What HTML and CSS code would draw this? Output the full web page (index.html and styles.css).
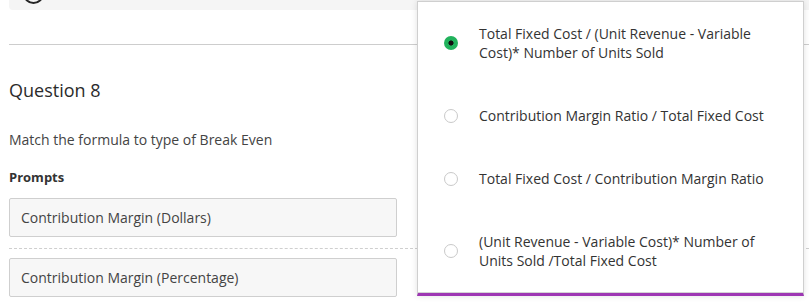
FILE: index.html
```html
<!DOCTYPE html>
<html lang="en">
<head>
  <meta charset="UTF-8">
  <meta name="viewport" content="width=device-width, initial-scale=1.0">
  <title>Question 8</title>
  <link rel="stylesheet" href="styles.css">
</head>
<body>
  <div class="page">
    <div class="prev-question">
      <span class="prev-icon"></span>
    </div>
    <hr class="divider">

    <h2 class="question-title">Question 8</h2>
    <p class="question-text">Match the formula to type of Break Even</p>
    <h3 class="prompts-label">Prompts</h3>

    <div class="prompt-box">Contribution Margin (Dollars)</div>
    <div class="prompt-sep"></div>
    <div class="prompt-box">Contribution Margin (Percentage)</div>

    <!-- answer dropdown, open over the prompts -->
    <div class="answer-menu">
      <ul class="answer-list">
        <li class="answer-option">
          <span class="radio checked"></span>
          <span class="answer-text">Total Fixed Cost / (Unit Revenue - Variable Cost)* Number of Units Sold</span>
        </li>
        <li class="answer-option">
          <span class="radio"></span>
          <span class="answer-text">Contribution Margin Ratio / Total Fixed Cost</span>
        </li>
        <li class="answer-option">
          <span class="radio"></span>
          <span class="answer-text">Total Fixed Cost / Contribution Margin Ratio</span>
        </li>
        <li class="answer-option">
          <span class="radio"></span>
          <span class="answer-text">(Unit Revenue - Variable Cost)* Number of Units Sold /Total Fixed Cost</span>
        </li>
      </ul>
    </div>
  </div>
</body>
</html>
```

FILE: styles.css
```css
body {
  margin: 0;
  padding: 0;
  background-color: #fff;
  font-family: "Open Sans", Arial, sans-serif;
  color: #333;
  overflow: hidden;
}

.page {
  position: relative;
  padding: 0 0 0 9px;
  height: 307px;
}

.prev-question {
  height: 10px;
  background-color: #f5f5f5;
  border-radius: 0 0 0 4px;
  overflow: hidden;
}

.prev-icon {
  display: block;
  width: 17px;
  height: 17px;
  margin: -17px 0 0 14px;
  border: 2px solid #262626;
  border-radius: 50%;
}

.divider {
  margin: 34px 0 0 0;
  border: none;
  border-top: 1px solid #cdcdcd;
}

.question-title {
  margin: 33px 0 0 0;
  font-size: 18px;
  font-weight: normal;
  line-height: 24px;
  color: #2b2b2b;
}

.question-text {
  margin: 28px 0 0 0;
  font-size: 14px;
  line-height: 20px;
  color: #444;
}

.prompts-label {
  margin: 18px 0 0 0;
  font-size: 13px;
  font-weight: bold;
  line-height: 18px;
  color: #333;
}

.prompt-box {
  box-sizing: border-box;
  width: 388px;
  height: 39px;
  margin-top: 12px;
  padding: 0 11px;
  background-color: #f7f7f7;
  border: 1px solid #cfcfcf;
  border-radius: 2px;
  font-size: 14px;
  line-height: 37px;
  color: #444;
}

.prompt-sep {
  margin: 11px 0 0 0;
  border-top: 1px dashed #cfcfcf;
}

.prompt-sep + .prompt-box {
  margin-top: 9px;
}

/* dropdown overlay */
.answer-menu {
  position: absolute;
  top: 1px;
  left: 417px;
  width: 387px;
  box-sizing: border-box;
  background-color: #fff;
  border: 1px solid #cfcfcf;
  border-bottom: 3px solid #9d36b3;
  box-shadow: 0 0 6px rgba(0, 0, 0, 0.12);
}

.answer-list {
  list-style: none;
  margin: 0;
  padding: 0;
  border-bottom: 1px solid #d4d4d4;
}

.answer-option {
  display: flex;
  align-items: center;
  padding: 22px 20px 22px 26px;
  font-size: 14px;
  line-height: 19px;
  color: #333;
}

.radio {
  flex: none;
  box-sizing: border-box;
  width: 14px;
  height: 14px;
  margin-right: 21px;
  border: 1px solid #c9c9c9;
  border-radius: 50%;
  background-color: #fff;
}

.radio.checked {
  border: none;
  background: radial-gradient(circle, #111 0, #111 2.3px, #21b25c 2.8px);
}

.answer-text {
  flex: 1;
}
```
